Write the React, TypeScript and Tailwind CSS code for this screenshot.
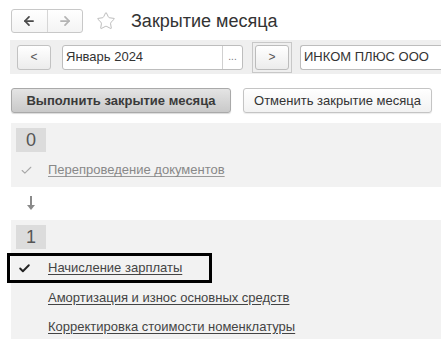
import { ArrowLeft, ArrowRight, Star, Check } from "lucide-react";

const font = { fontFamily: '"Liberation Sans", Arial, sans-serif' };

export default function App() {
  return (
    <div className="w-[441px] h-[339px] overflow-hidden bg-white text-[#333]" style={font}>
      {/* Header */}
      <div className="h-[40px] flex items-center pl-[11px] pt-[1px]">
        <div className="flex h-[24px] w-[72px] rounded-[3px] border border-[#c8c8c8] bg-gradient-to-b from-white to-[#f4f4f4]">
          <div className="flex-1 flex items-center justify-center border-r border-[#d6d6d6]">
            <ArrowLeft size={14} strokeWidth={3} className="text-[#4a4a4a]" />
          </div>
          <div className="flex-1 flex items-center justify-center">
            <ArrowRight size={14} strokeWidth={3} className="text-[#b4b4b4]" />
          </div>
        </div>
        <Star size={20} strokeWidth={1} className="ml-[13px] text-[#b0b0b0]" />
        <span className="ml-[15px] text-[18px] text-[#333] leading-none">Закрытие месяца</span>
      </div>

      {/* Toolbar */}
      <div className="ml-[10px] h-[34px] bg-[#efefef] flex items-center pl-[7px]">
        <div className="w-[34px] h-[25px] rounded-[3px] border border-[#c2c2c2] bg-gradient-to-b from-white to-[#ececec] flex items-center justify-center text-[12px] text-[#555]">
          &lt;
        </div>
        <div className="ml-[11px] w-[181px] h-[25px] rounded-[3px] border border-[#bdbdbd] bg-white flex">
          <div className="flex-1 flex items-center pl-[3px] text-[13px] text-[#333]">Январь 2024</div>
          <div className="w-[20px] border-l border-[#d0d0d0] flex items-center justify-center text-[10px] text-[#777] pb-[2px]">...</div>
        </div>
        <div className="ml-[9px] p-[2px] border border-[#c8c8c8]">
          <div className="w-[34px] h-[25px] rounded-[3px] border border-[#bcbcbc] bg-gradient-to-b from-white to-[#ececec] flex items-center justify-center text-[12px] text-[#555]">
            &gt;
          </div>
        </div>
        <div className="ml-[8px] flex-1 h-[25px] rounded-l-[3px] border border-r-0 border-[#bdbdbd] bg-white flex items-center pl-[3px] text-[13px] text-[#333]">
          ИНКОМ ПЛЮС ООО
        </div>
      </div>

      {/* Action buttons */}
      <div className="flex items-center pl-[11px] mt-[14px] h-[25px]">
        <div className="w-[220px] h-[25px] rounded-[3px] border border-[#a9a9a9] bg-gradient-to-b from-[#e4e4e4] to-[#c9c9c9] flex items-center justify-center text-[13px] font-bold text-[#3a3a3a] shadow-[0_1px_1px_rgba(0,0,0,0.15)]">
          Выполнить закрытие месяца
        </div>
        <div className="ml-[12px] w-[189px] h-[25px] rounded-[3px] border border-[#c4c4c4] bg-gradient-to-b from-white to-[#f2f2f2] flex items-center justify-center text-[13px] text-[#333] shadow-[0_1px_1px_rgba(0,0,0,0.08)]">
          Отменить закрытие месяца
        </div>
      </div>

      {/* Stage 0 */}
      <div className="ml-[11px] mt-[10px] h-[64px] bg-[#f2f2f2] pt-[5px]">
        <div className="ml-[5px] w-[30px] h-[24px] bg-[#dcdcdc] flex items-center justify-center text-[18px] text-[#555] font-light">0</div>
        <div className="flex items-center h-[30px] mt-[3px]">
          <Check size={13} strokeWidth={2} className="ml-[9px] text-[#a8a8a8]" />
          <span className="ml-[15px] text-[13px] text-[#888] underline underline-offset-2 decoration-[#999]">Перепроведение документов</span>
        </div>
      </div>

      {/* Arrow */}
      <div className="h-[33px] flex items-center pl-[26px]">
        <svg width="10" height="15" viewBox="0 0 10 15">
          <rect x="4" y="0" width="2" height="10" fill="#8a8a8a" />
          <path d="M1 9 L9 9 L5 14 Z" fill="#8a8a8a" />
        </svg>
      </div>

      {/* Stage 1 */}
      <div className="ml-[11px] h-[130px] bg-[#f2f2f2] pt-[5px]">
        <div className="ml-[5px] w-[30px] h-[24px] bg-[#dcdcdc] flex items-center justify-center text-[18px] text-[#555] font-light">1</div>
        <div className="relative flex items-center h-[30px] mt-[4px]">
          <Check size={13} strokeWidth={3.5} className="ml-[7px] text-[#222]" />
          <span className="ml-[17px] text-[13px] text-[#444] underline underline-offset-2">Начисление зарплаты</span>
          <div className="absolute left-[-4px] top-0 w-[205px] h-[30px] border-[3px] border-black" />
        </div>
        <div className="flex items-center h-[29px] pl-[37px] text-[13px] text-[#444] underline underline-offset-2">
          Амортизация и износ основных средств
        </div>
        <div className="flex items-center h-[29px] pl-[37px] text-[13px] text-[#444] underline underline-offset-2">
          Корректировка стоимости номенклатуры
        </div>
      </div>
    </div>
  );
}
